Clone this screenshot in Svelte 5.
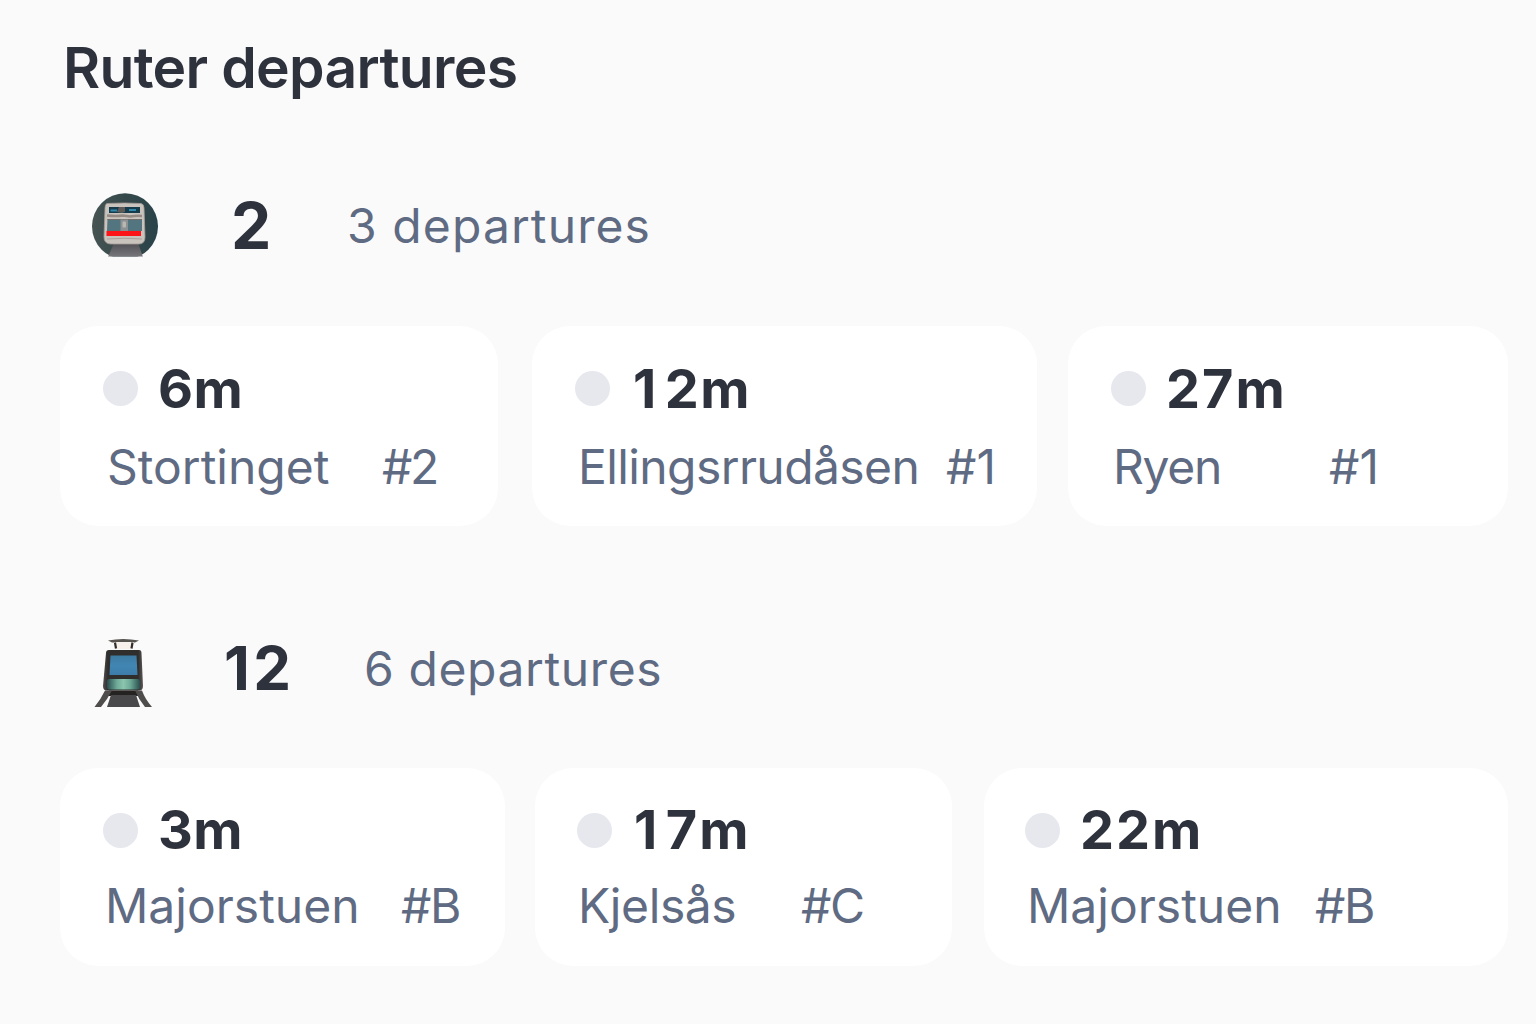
<script>
  const lines = [
    {
      id: 'metro',
      number: '2',
      count: '3 departures',
      stops: [
        { id: 'stortinget', time: '6m', name: 'Stortinget', platform: '#2' },
        { id: 'ellingsrud', time: '12m', name: 'Ellingsrrudåsen', platform: '#1' },
        { id: 'ryen', time: '27m', name: 'Ryen', platform: '#1' },
      ],
    },
    {
      id: 'tram',
      number: '12',
      count: '6 departures',
      stops: [
        { id: 'major-first', time: '3m', name: 'Majorstuen', platform: '#B' },
        { id: 'kjelsas', time: '17m', name: 'Kjelsås', platform: '#C' },
        { id: 'major-last', time: '22m', name: 'Majorstuen', platform: '#B' },
      ],
    },
  ];
</script>

<main>
  <h1>Ruter departures</h1>
  {#each lines as line (line.id)}
    <section class={line.id}>
      <header>
        {#if line.id === 'metro'}
          <svg class="icon" viewBox="0 0 90 90" aria-hidden="true">
            <defs>
              <clipPath id="disc"><path d="M12 0H78V76.5H12Z" /></clipPath>
              <linearGradient id="discFill" x1="0" x2="1">
                <stop offset="0" stop-color="#465453" />
                <stop offset=".5" stop-color="#34484a" />
                <stop offset="1" stop-color="#29434a" />
              </linearGradient>
              <linearGradient id="track" x1="0" x2="0" y1="0" y2="1">
                <stop offset="0" stop-color="#504f55" />
                <stop offset="1" stop-color="#77777c" />
              </linearGradient>
            </defs>
            <g clip-path="url(#disc)">
              <circle cx="45" cy="46.3" r="33" fill="url(#discFill)" />
              <path d="M34 63H58L63 77H28Z" fill="url(#track)" />
            </g>
            <path d="M27 23.500Q45 22.500 61 23.500Q64 24 64 28L65 57Q65 64 59 64H31Q24 64 24 57L25 28Q25 24 27 23.500Z" fill="#c9c3bd" stroke="#a49b94" stroke-width=".8" />
            <path d="M29 27H60V33H29Z" fill="#163c4c" />
            <path d="M30.500 30.500H37M49 30H56" stroke="#2f88ab" stroke-width="2" />
            <path d="M39 27H45V32L42 33L37 32Z" fill="#5e5a57" />
            <path d="M27 35.500Q36 36.500 43 35.500L50 36.500Q56 35.500 62 36" fill="none" stroke="#948a83" stroke-width="2.500" />
            <path d="M27.500 39H62V51H27Z" fill="#537580" />
            <path d="M27.500 39.500H61.500" stroke="#746f6c" stroke-width="1.200" />
            <rect x="40.500" y="39.500" width="7.500" height="11.500" fill="#8c9293" />
            <rect x="42.500" y="41.500" width="3.500" height="6" rx="1" fill="#b9b7b2" />
            <path d="M26.500 51H61V56H26.500Z" fill="#fb1519" />
            <path d="M27 59Q45 57.500 62 59" stroke="#aaa29c" stroke-width="1" fill="none" />
          </svg>
        {:else}
          <svg class="icon" viewBox="0 0 90 95" aria-hidden="true">
            <defs>
              <linearGradient id="glass" x1="0" x2="0" y1="0" y2="1">
                <stop offset="0" stop-color="#3c79a0" />
                <stop offset=".5" stop-color="#4186b3" />
                <stop offset="1" stop-color="#3d7caa" />
              </linearGradient>
              <linearGradient id="lamp" x1="0" x2="1">
                <stop offset="0" stop-color="#2a4e4e" />
                <stop offset=".3" stop-color="#6faa98" />
                <stop offset=".5" stop-color="#8bc5ae" />
                <stop offset=".7" stop-color="#6faa98" />
                <stop offset="1" stop-color="#2a4e4e" />
              </linearGradient>
              <linearGradient id="shell" x1="0" x2="1">
                <stop offset="0" stop-color="#51504e" />
                <stop offset=".12" stop-color="#2f2e2d" />
                <stop offset=".88" stop-color="#2f2e2d" />
                <stop offset="1" stop-color="#5b5957" />
              </linearGradient>
            </defs>
            <path d="M28 15.500Q43 12.500 59 15.500L55 17.500H32Z" fill="#57534f" />
            <path d="M34 17H54L53 24H35Z" fill="#f8f0ea" />
            <path d="M35 17.500L36 23.500M52.500 17.500L51.500 23.500" stroke="#302d2a" stroke-width="2.200" />
            <path d="M29 25H59Q61.500 25 61.500 28L63 61Q63 65.500 59 65.500H27Q23 65.500 23 61L26 28Q26 25 29 25Z" fill="url(#shell)" />
            <path d="M30.500 30.500H56.500L57.500 50H29.500Z" fill="url(#glass)" />
            <rect x="27" y="54" width="33" height="10.500" rx="2.500" fill="url(#lamp)" />
            <path d="M29 65.500H58L60 71H28Z" fill="#242322" />
            <path d="M25 65.500H32Q27 75 21 82H14.500Q21 74 25 65.500ZM55 65.500H62Q65 74 72 82H65Q59 75 55 65.500Z" fill="#4f4d4b" />
            <path d="M31 70H56L60 82H27Z" fill="#49484b" />
          </svg>
        {/if}
        <strong class="number">{line.number}</strong>
        <span class="count">{line.count}</span>
      </header>
      <div class="cards">
        {#each line.stops as stop (stop.id)}
          <article class={stop.id}>
            <div class="when"><i class="dot"></i><b>{stop.time}</b></div>
            <div class="where"><span class="name">{stop.name}</span><span class="platform">{stop.platform}</span></div>
          </article>
        {/each}
      </div>
    </section>
  {/each}
</main>

<style>
  :global(body) { margin: 0; background: #fafafa; }
  main {
    box-sizing: border-box;
    width: 1536px;
    height: 1024px;
    overflow: hidden;
    padding-left: 60px;
    background: #fafafa;
    color: #2e323d;
    font-family: Inter, "Liberation Sans", sans-serif;
    white-space: nowrap;
  }
  h1 {
    height: 70px;
    margin: 0;
    padding: 33px 0 77px 3px;
    font-size: 57px;
    line-height: 70px;
    font-weight: 600;
    letter-spacing: -0.7px;
  }
  header { display: flex; align-items: flex-start; height: 90px; padding-left: 20px; }
  .icon { width: 90px; height: 90px; flex: none; }
  .tram .icon { height: 95px; }
  .number { flex: none; width: 116px; margin-left: 61px; font-size: 64px; line-height: 91px; font-weight: 700; }
  .count { color: #5f6b83; font-size: 48px; line-height: 92px; letter-spacing: 1.1px; }
  .tram header { height: 95px; margin-top: 99px; }
  .tram .number { width: 140px; margin-left: 54px; font-size: 60px; line-height: 86px; letter-spacing: 3.5px; }
  .tram .count { line-height: 87px; letter-spacing: 0.6px; }
  .cards { display: flex; margin-top: 56px; }
  .tram .cards { margin-top: 48px; }
  article { box-sizing: border-box; flex: none; height: 200px; padding: 27px 0 0 43px; border-radius: 38px; background: #fff; }
  .tram article { height: 198px; }
  .when { display: flex; align-items: center; height: 70px; }
  .dot { width: 35px; height: 35px; border-radius: 50%; background: #e7e8ee; }
  b { margin: 1px 0 0 20px; font-size: 54px; line-height: 72px; font-weight: 700; letter-spacing: 1.5px; font-kerning: none; }
  .tram b { margin-top: 0; }
  .where { display: flex; align-items: center; height: 60px; margin-top: 14px; color: #5f6b83; font-size: 48px; line-height: 60px; }
  .tram .where { margin-top: 11px; }
  .name { box-sizing: border-box; flex: none; }
  .platform { letter-spacing: -1.5px; }

  .stortinget { width: 438px; }
  .stortinget b, .major-first b { letter-spacing: 0.5px; }
  .stortinget .name { width: 279px; padding-left: 4px; }
  .stortinget .platform { letter-spacing: -2.5px; }
  .ellingsrud { width: 505px; margin-left: 34px; }
  .ellingsrud b { margin-left: 23px; }
  .ellingsrud b::first-letter, .kjelsas b::first-letter { letter-spacing: 8.5px; }
  .ellingsrud .name { width: 371px; padding-left: 3px; letter-spacing: -0.6px; }
  .ellingsrud .platform, .ryen .platform { letter-spacing: 0; }
  .ryen { width: 440px; margin-left: 31px; }
  .ryen b, .major-last b { letter-spacing: 2px; }
  .ryen .name { width: 218px; padding-left: 2px; letter-spacing: -1.3px; }
  .major-first { width: 445px; }
  .major-first .name { width: 298px; padding-left: 2px; }
  .kjelsas { width: 417px; margin-left: 30px; padding-left: 42px; }
  .kjelsas b { margin-left: 22px; letter-spacing: 2px; }
  .kjelsas .name { width: 224px; padding-left: 1px; letter-spacing: -0.4px; }
  .major-last { width: 524px; margin-left: 32px; padding-left: 41px; }
  .major-last .name { width: 290px; padding-left: 2px; }
</style>
